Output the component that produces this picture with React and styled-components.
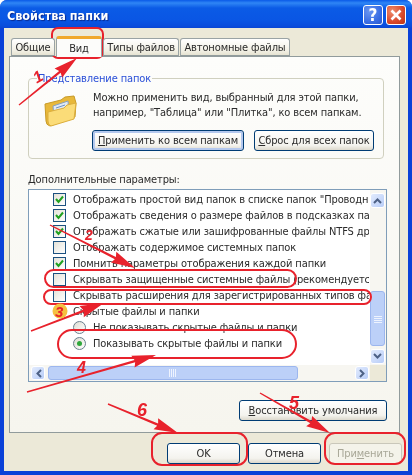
import React from 'react'
import styled, { createGlobalStyle } from 'styled-components';

const Global = createGlobalStyle`
    html, body { margin: 0; padding: 0; background: #fff; }
    * { box-sizing: border-box; }
`;

const Frame = styled.div`
    position: relative;
    width: 412px;
    height: 475px;
    overflow: hidden;
    display: flex;
    flex-direction: column;
    padding: 0 4px 4px;
    background: #0a41d8;
    border-radius: 7px 7px 0 0;
    font-family: "DejaVu Sans Condensed", "Liberation Sans", Arial, sans-serif;
    font-size: 11px;
    letter-spacing: -0.12px;
    color: #2a2a2a;
    filter: blur(0.3px);
`;

const TitleBar = styled.div`
    height: 28px;
    margin: 0 -4px;
    padding: 2px 6px 0 7px;
    display: flex;
    align-items: center;
    gap: 3px;
    background: linear-gradient(#0a5ae8 0, #2f86f5 3px, #0b5be6 8px, #0a56e4 20px, #0a4ddc 26px, #0a46d4 28px);
`;

const Title = styled.div`
    flex: 1;
    color: #fff;
    font-weight: bold;
    font-size: 12.5px;
    letter-spacing: 0;
    text-shadow: 1px 1px 1px #0a2a90;
`;

const CaptionButton = styled.div`
    width: 20px;
    height: 20px;
    border: 1px solid #fff;
    border-radius: 3px;
    display: flex;
    align-items: center;
    justify-content: center;
    color: #fff;
    font-weight: bold;
    font-size: 17px;
    background: ${p => p.$close
        ? 'radial-gradient(circle at 30% 30%, #ee8e6e, #d8482a 60%, #bc3414)'
        : 'radial-gradient(circle at 30% 30%, #6a96f0, #3a6ee4 60%, #2a58cc)'};
`;

const Body = styled.div`
    flex: 1;
    display: flex;
    flex-direction: column;
    background: #ece9d8;
    padding: 10px 8px 0 5px;
`;

const TabStrip = styled.div`
    height: 18px;
    display: flex;
    align-items: flex-end;
    padding-left: 2px;
    gap: 1px;
    position: relative;
    z-index: 1;
`;

const Tab = styled.div`
    height: ${p => p.$active ? '21px' : '18px'};
    width: ${p => p.$w}px;
    margin-bottom: ${p => p.$active ? '-1px' : '0'};
    padding-top: ${p => p.$active ? '3px' : '2px'};
    text-align: center;
    white-space: nowrap;
    border: 1px solid #9aa3a4;
    border-bottom: ${p => p.$active ? 'none' : '1px solid #919b9c'};
    border-radius: 3px 3px 0 0;
    background: ${p => p.$active ? '#fcfcfa' : 'linear-gradient(#fff, #f3f1e6 70%, #e6e3d2)'};
    border-top: ${p => p.$active ? '3px solid #f0a82c' : '1px solid #9aa3a4'};
`;

const Panel = styled.div`
    height: 377px;
    border: 1px solid #919b9c;
    background: linear-gradient(#fdfdfb, #f6f5ee);
    padding: 15px 12px 0 18px;
    display: flex;
    flex-direction: column;
`;

const GroupBox = styled.fieldset`
    margin: 0;
    width: 356px;
    height: 87px;
    padding: 0 0 0 15px;
    border: 1px solid #d0d0bf;
    border-radius: 4px;
    display: flex;
    flex-direction: column;
`;

const Legend = styled.legend`
    margin-left: -7px;
    padding: 0 1px;
    color: #2a4fd8;
`;

const GroupRow = styled.div`
    display: flex;
    gap: 16px;
    height: 33px;
    margin-top: 5px;
`;

const Folder = styled.svg`
    width: 33px;
    height: 32px;
    margin-top: 5px;
    flex: none;
`;

const GroupText = styled.div`
    line-height: 15px;
    white-space: nowrap;
`;

const GroupButtons = styled.div`
    display: flex;
    gap: 10px;
    margin: 7px 0 0 48px;
`;

const Button = styled.div`
    width: ${p => p.$w}px;
    height: 21px;
    display: flex;
    align-items: center;
    justify-content: center;
    white-space: nowrap;
    border: 1px solid ${p => p.$off ? '#c9c7ba' : '#003c74'};
    border-radius: 3px;
    color: ${p => p.$off ? '#a8a797' : 'inherit'};
    background: ${p => p.$off ? '#f4f3ea' : 'linear-gradient(#fff, #f4f3ee 75%, #dcd8cc)'};
    box-shadow: ${p => p.$focus ? 'inset 0 0 0 2px #b4c8ee' : 'none'};
`;

const Key = styled.span`
    text-decoration: underline;
`;

const ListLabel = styled.div`
    margin-top: 14px;
    height: 16px;
`;

const TreeBox = styled.div`
    width: 359px;
    height: 193px;
    border: 1px solid #7f9db9;
    background: #fff;
    display: grid;
    grid-template-columns: 1fr 16px;
    grid-template-rows: 1fr 16px;
`;

const Rows = styled.div`
    overflow: hidden;
    padding: 1px 0 0 24px;
    margin-right: 1px;
`;

const Row = styled.div`
    height: 16px;
    display: flex;
    align-items: center;
    gap: 7px;
    white-space: nowrap;
    padding-left: ${p => p.$indent ? '20px' : '0'};
`;

const Check = styled.div`
    width: 13px;
    height: 13px;
    flex: none;
    border: 1px solid #1c5180;
    background: linear-gradient(135deg, #e4e2d8, #fff);
    display: flex;
    align-items: center;
    justify-content: center;
`;

const Radio = styled.div`
    width: 13px;
    height: 13px;
    flex: none;
    border: 1px solid #6a7f8e;
    border-radius: 50%;
    background: linear-gradient(135deg, #dedcd2, #fff);
    display: flex;
    align-items: center;
    justify-content: center;
`;

const Dot = styled.div`
    width: 5px;
    height: 5px;
    border-radius: 50%;
    background: #2fa83c;
`;

const GroupIcon = styled.div`
    width: 13px;
    height: 13px;
    flex: none;
`;

const ScrollY = styled.div`
    display: flex;
    flex-direction: column;
    gap: 1px;
    padding: 3px 0 1px;
    background: #f7f6f1;
`;

const ScrollX = styled.div`
    display: flex;
    gap: 2px;
    padding: 1px 1px 0 2px;
    background: #f7f6f1;
`;

const Corner = styled.div`
    background: #ece9d8;
`;

const ArrowBtn = styled.div`
    width: ${p => p.$w}px;
    height: ${p => p.$h}px;
    flex: none;
    border: 1px solid #fff;
    border-radius: 3px;
    background: linear-gradient(135deg, #e2ebfd, #b8cdf8);
    display: flex;
    align-items: center;
    justify-content: center;
`;

const Track = styled.div`
    flex: 1;
    display: flex;
    flex-direction: ${p => p.$v ? 'column' : 'row'};
    justify-content: ${p => p.$v ? 'flex-end' : 'flex-start'};
    padding: ${p => p.$v ? '0 0 2px' : '0 0 0 1px'};
`;

const Thumb = styled.div`
    width: ${p => p.$w};
    height: ${p => p.$h};
    border: 1px solid #9cb6ee;
    border-radius: 3px;
    background: #bcd0f8;
    display: flex;
    align-items: center;
    justify-content: center;
`;

const RestoreRow = styled.div`
    display: flex;
    justify-content: flex-end;
    width: 359px;
    margin-top: 18px;
`;

const Footer = styled.div`
    display: flex;
    justify-content: flex-end;
    gap: 8px;
    padding-top: 10px;
    margin-right: -2px;
`;

const Overlay = styled.svg`
    position: absolute;
    left: 0;
    top: 0;
    width: 412px;
    height: 475px;
    pointer-events: none;
`;

const Digit = styled.text`
    fill: #e8222c;
    font-family: "Liberation Sans", Arial, sans-serif;
    font-weight: bold;
    font-style: italic;
    font-size: ${p => p.$size}px;
`;

const rows = [
    { kind: 'check', on: true, text: 'Отображать простой вид папок в списке папок "Проводника"' },
    { kind: 'check', on: true, text: 'Отображать сведения о размере файлов в подсказках папок' },
    { kind: 'check', on: true, text: 'Отображать сжатые или зашифрованные файлы NTFS другим цветом' },
    { kind: 'check', on: false, text: 'Отображать содержимое системных папок' },
    { kind: 'check', on: true, text: 'Помнить параметры отображения каждой папки' },
    { kind: 'check', on: false, text: 'Скрывать защищенные системные файлы (рекомендуется)' },
    { kind: 'check', on: false, text: 'Скрывать расширения для зарегистрированных типов файлов' },
    { kind: 'group', text: 'Скрытые файлы и папки' },
    { kind: 'radio', on: false, text: 'Не показывать скрытые файлы и папки' },
    { kind: 'radio', on: true, text: 'Показывать скрытые файлы и папки' },
];

const arrows = [
    [19, 105, 77, 58],
    [50, 225, 135, 268],
    [31, 331, 104, 303],
    [27, 392, 156, 355],
    [260, 393, 330, 433],
    [108, 404, 178, 433],
];

function arrowPoints([x1, y1, x2, y2]) {
    const len = Math.hypot(x2 - x1, y2 - y1);
    const ux = (x2 - x1) / len;
    const uy = (y2 - y1) / len;
    const bx = x2 - ux * 22;
    const by = y2 - uy * 22;
    const p = (x, y, d) => `${x - uy * d},${y + ux * d}`;
    return [p(x1, y1, 0.7), p(bx, by, 1.2), p(bx - ux * 2, by - uy * 2, 6), `${x2},${y2}`,
        p(bx - ux * 2, by - uy * 2, -6), p(bx, by, -1.2), p(x1, y1, -0.7)].join(' ');
}

const Chevron = ({ d }) => (
    <svg width="9" height="7" viewBox="0 0 9 7">
        <path d={d} fill="none" stroke="#4d6185" strokeWidth="2" />
    </svg>
);

const Grip = ({ vertical }) => (
    <svg width="8" height="8" viewBox="0 0 8 8">
        <path
            d={vertical ? 'M0 1.5 H8 M0 3.5 H8 M0 5.5 H8 M0 7.5 H8' : 'M.5 0 V8 M2.5 0 V8 M4.5 0 V8 M6.5 0 V8'}
            stroke="#eef3fe"
        />
    </svg>
);

function TreeRow({ row }) {
    return (
        <Row $indent={row.kind === 'radio'}>
            {row.kind === 'check' && (
                <Check>
                    {row.on && (
                        <svg width="9" height="9" viewBox="0 0 9 9">
                            <path d="M1 4 L3.5 7 L8 1.5" fill="none" stroke="#21a121" strokeWidth="2" />
                        </svg>
                    )}
                </Check>
            )}
            {row.kind === 'radio' && <Radio>{row.on && <Dot />}</Radio>}
            {row.kind === 'group' && <GroupIcon />}
            <span>{row.text}</span>
        </Row>
    );
}

export default function App() {
    return (
        <Frame>
            <Global />
            <TitleBar>
                <Title>Свойства папки</Title>
                <CaptionButton>?</CaptionButton>
                <CaptionButton $close>
                    <svg width="12" height="12" viewBox="0 0 12 12">
                        <path d="M1.5 1.5 L10.5 10.5 M10.5 1.5 L1.5 10.5" stroke="#fff" strokeWidth="2.6" />
                    </svg>
                </CaptionButton>
            </TitleBar>
            <Body>
                <TabStrip>
                    <Tab $w={44}>Общие</Tab>
                    <Tab $w={46} $active>Вид</Tab>
                    <Tab $w={76}>Типы файлов</Tab>
                    <Tab $w={110}>Автономные файлы</Tab>
                </TabStrip>
                <Panel>
                    <GroupBox>
                        <Legend>Представление папок</Legend>
                        <GroupRow>
                            <Folder viewBox="0 0 33 32">
                                <path d="M1 9 L17 5 L21 2 L30 1 L32 8 L31 22 L6 31 Q2 30 2 26 Z" fill="#e8b83a" stroke="#c79a28" />
                                <path d="M9 11 L24 6 L25 18 L10 23 Z" fill="#dfe9f4" stroke="#8aa0bc" />
                                <path d="M12 13 L21 10 M12 16 L22 13" stroke="#6f92c4" />
                                <path d="M4 17 L20 13 L23 10 L32 8 L30 24 L7 31 Q4 30 4 26 Z" fill="#fbdc78" stroke="#dcae3c" />
                            </Folder>
                            <GroupText>
                                Можно применить вид, выбранный для этой папки,<br />
                                например, "Таблица" или "Плитка", ко всем папкам.
                            </GroupText>
                        </GroupRow>
                        <GroupButtons>
                            <Button $w={152} $focus><span><Key>П</Key>рименить ко всем папкам</span></Button>
                            <Button $w={120}><span><Key>С</Key>брос для всех папок</span></Button>
                        </GroupButtons>
                    </GroupBox>
                    <ListLabel>Дополнительные параметры:</ListLabel>
                    <TreeBox>
                        <Rows>
                            {rows.map(row => <TreeRow key={row.text} row={row} />)}
                        </Rows>
                        <ScrollY>
                            <ArrowBtn $w={15} $h={15}><Chevron d="M1 6 L4.5 2.5 L8 6" /></ArrowBtn>
                            <Track $v>
                                <Thumb $w="15px" $h="55px"><Grip vertical /></Thumb>
                            </Track>
                            <ArrowBtn $w={15} $h={15}><Chevron d="M1 1 L4.5 4.5 L8 1" /></ArrowBtn>
                        </ScrollY>
                        <ScrollX>
                            <ArrowBtn $w={14} $h={14}>
                                <svg width="7" height="9" viewBox="0 0 7 9"><path d="M6 1 L2.5 4.5 L6 8" fill="none" stroke="#4d6185" strokeWidth="2" /></svg>
                            </ArrowBtn>
                            <Track>
                                <Thumb $w="250px" $h="14px"><Grip /></Thumb>
                            </Track>
                            <ArrowBtn $w={14} $h={14}>
                                <svg width="7" height="9" viewBox="0 0 7 9"><path d="M1 1 L4.5 4.5 L1 8" fill="none" stroke="#4d6185" strokeWidth="2" /></svg>
                            </ArrowBtn>
                        </ScrollX>
                        <Corner />
                    </TreeBox>
                    <RestoreRow>
                        <Button $w={148}><span><Key>В</Key>осстановить умолчания</span></Button>
                    </RestoreRow>
                </Panel>
                <Footer>
                    <Button $w={73}>OK</Button>
                    <Button $w={73}>Отмена</Button>
                    <Button $w={73} $off><span>При<Key>м</Key>енить</span></Button>
                </Footer>
            </Body>
            <Overlay viewBox="0 0 412 475">
                <g fill="none" stroke="#e8222c" strokeWidth="2">
                    <rect x="52" y="28" width="51" height="30" rx="6" />
                    <rect x="45" y="270" width="251" height="17" rx="8.5" />
                    <rect x="44" y="290" width="327" height="14" rx="7" />
                    <rect x="58" y="330" width="238" height="28" rx="14" />
                    <rect x="152" y="433" width="95" height="32" rx="10" />
                    <rect x="325" y="433" width="80" height="31" rx="10" />
                </g>
                {arrows.map(a => <polygon key={a.join()} points={arrowPoints(a)} fill="#e8222c" />)}
                <circle cx="60" cy="311" r="7.5" fill="#f5c040" />
                <Digit x="55" y="317" $size={15}>3</Digit>
                <Digit x="33" y="82" $size={16} transform="rotate(-30 38 76)">1</Digit>
                <Digit x="85" y="240" $size={14}>2</Digit>
                <Digit x="77" y="373" $size={16}>4</Digit>
                <Digit x="289" y="409" $size={18}>5</Digit>
                <Digit x="137" y="416" $size={18}>6</Digit>
            </Overlay>
        </Frame>
    )
}
